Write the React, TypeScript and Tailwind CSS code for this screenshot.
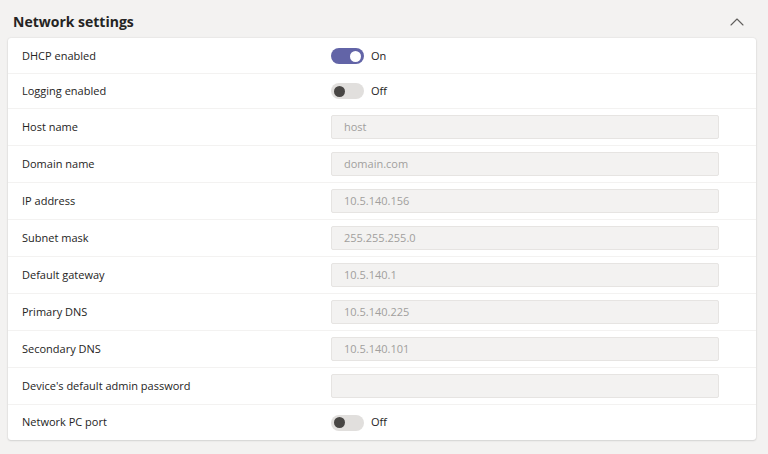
import { ChevronUp } from 'lucide-react'

interface Row {
  label: string
  kind: 'toggle' | 'input'
  on?: boolean
  value?: string
}

const rows: Row[] = [
  { label: 'DHCP enabled', kind: 'toggle', on: true },
  { label: 'Logging enabled', kind: 'toggle', on: false },
  { label: 'Host name', kind: 'input', value: 'host' },
  { label: 'Domain name', kind: 'input', value: 'domain.com' },
  { label: 'IP address', kind: 'input', value: '10.5.140.156' },
  { label: 'Subnet mask', kind: 'input', value: '255.255.255.0' },
  { label: 'Default gateway', kind: 'input', value: '10.5.140.1' },
  { label: 'Primary DNS', kind: 'input', value: '10.5.140.225' },
  { label: 'Secondary DNS', kind: 'input', value: '10.5.140.101' },
  { label: "Device's default admin password", kind: 'input', value: '' },
  { label: 'Network PC port', kind: 'toggle', on: false },
]

function Toggle({ on }: { on: boolean }) {
  return (
    <div className="flex items-center gap-[7px]">
      <div
        className={
          on
            ? 'flex h-[16px] w-[33px] items-center justify-end rounded-full bg-[#6264a7] px-[3px]'
            : 'flex h-[16px] w-[33px] items-center justify-start rounded-full bg-[#e1dfdd] px-[3px]'
        }
      >
        <div className={on ? 'h-[11px] w-[11px] rounded-full bg-white' : 'h-[11px] w-[11px] rounded-full bg-[#484644]'} />
      </div>
      <span className="text-[11px] text-[#252423]">{on ? 'On' : 'Off'}</span>
    </div>
  )
}

export default function App() {
  return (
    <div
      className="h-[454px] w-[768px] overflow-hidden bg-[#f3f2f1] pl-[8px] pr-[12px]"
      style={{ fontFamily: '"Open Sans", "Noto Sans", sans-serif' }}
    >
      <div className="flex h-[38px] items-center justify-between pl-[5px] pr-[7px] pt-[5px]">
        <div className="text-[14px] font-bold text-[#252423]">Network settings</div>
        <ChevronUp className="h-[24px] w-[24px] text-[#605e5c]" strokeWidth={1.1} />
      </div>

      <div className="rounded-[3px] bg-white shadow-[0_0_2px_rgba(0,0,0,0.12),0_1px_2px_rgba(0,0,0,0.1)]">
        {rows.map((row, idx) => (
          <div
            key={row.label}
            className={
              (idx === 0 ? 'h-[36px] pt-[1px] ' : row.kind === 'toggle' ? 'h-[35px] ' : 'h-[37px] ') +
              'flex items-center ' +
              (idx < rows.length - 1 ? 'border-b border-[#f3f2f1]' : '')
            }
          >
            <div className="w-[323px] shrink-0 pl-[14px] text-[11px] text-[#252423]">{row.label}</div>
            {row.kind === 'toggle' ? (
              <Toggle on={!!row.on} />
            ) : (
              <div className="flex h-[24px] w-[388px] items-center rounded-[2px] border border-[#e6e4e2] bg-[#f3f2f1] pl-[12px] text-[11px] text-[#a19f9d]">
                {row.value}
              </div>
            )}
          </div>
        ))}
      </div>
    </div>
  )
}
